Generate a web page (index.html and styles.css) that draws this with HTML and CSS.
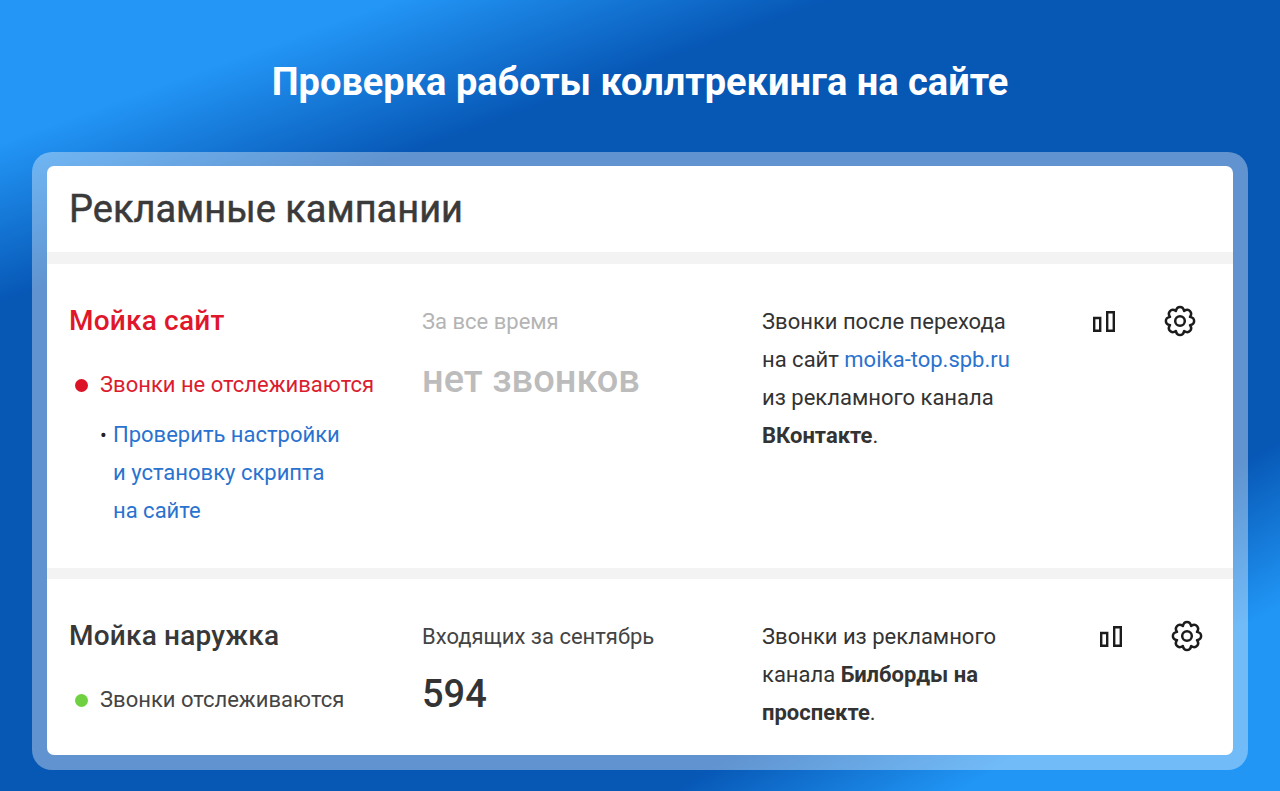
FILE: index.html
```html
<!DOCTYPE html>
<html lang="ru">
<head>
    <meta charset="UTF-8">
    <title>Проверка работы коллтрекинга на сайте</title>
    <link rel="stylesheet" href="styles.css">
</head>
<body>
    <svg class="icon-defs" width="0" height="0">
        <symbol id="icon-bars" viewBox="0 0 22 21">
            <path d="M1.2 7h6v12.800h-6zM14.200 1.200h6.600v18.600h-6.600z" fill="none" stroke="currentColor" stroke-width="2.400"/>
        </symbol>
        <symbol id="icon-gear" viewBox="0 0 32 32">
            <path d="M11.870 6.020C12.900 .5 19.100 .5 20.130 6.020C24.770 2.850 29.150 7.230 25.980 11.870C31.500 12.900 31.500 19.100 25.980 20.130C29.150 24.770 24.770 29.150 20.130 25.980C19.100 31.500 12.900 31.500 11.870 25.980C7.230 29.150 2.850 24.770 6.020 20.130C.5 19.100 .5 12.900 6.020 11.870C2.850 7.230 7.230 2.850 11.870 6.020Z" fill="none" stroke="currentColor" stroke-width="2.500" stroke-linejoin="round"/>
            <circle cx="16" cy="16" r="4.800" fill="none" stroke="currentColor" stroke-width="2.500"/>
        </symbol>
    </svg>

    <h1 class="title">Проверка работы коллтрекинга на сайте</h1>

    <div class="frame">
        <div class="panel">
            <h2 class="panel-title">Рекламные кампании</h2>

            <!-- первая кампания -->
            <div class="campaign campaign-first">
                <div class="col-name">
                    <div class="name name-error">Мойка сайт</div>
                    <div class="status status-error"><span class="dot dot-red"></span>Звонки не отслеживаются</div>
                    <div class="hint">
                        <span class="hint-mark">•</span>
                        <a class="link" href="#">Проверить настройки<br>и установку скрипта<br>на сайте</a>
                    </div>
                </div>
                <div class="col-stat">
                    <div class="stat-label stat-label-muted">За все время</div>
                    <div class="stat-empty">нет звонков</div>
                </div>
                <div class="col-text">
                    Звонки после перехода<br>на сайт <a class="link" href="#">moika-top.spb.ru</a><br>из рекламного канала<br><b>ВКонтакте</b>.
                </div>
                <div class="col-icons">
                    <svg class="icon-bars"><use href="#icon-bars"/></svg>
                    <svg class="icon-gear"><use href="#icon-gear"/></svg>
                </div>
            </div>

            <!-- вторая кампания -->
            <div class="campaign campaign-second">
                <div class="col-name">
                    <div class="name">Мойка наружка</div>
                    <div class="status"><span class="dot dot-green"></span>Звонки отслеживаются</div>
                </div>
                <div class="col-stat">
                    <div class="stat-label">Входящих за сентябрь</div>
                    <div class="stat-value">594</div>
                </div>
                <div class="col-text">
                    Звонки из рекламного<br>канала <b>Билборды на<br>проспекте</b>.
                </div>
                <div class="col-icons">
                    <svg class="icon-bars"><use href="#icon-bars"/></svg>
                    <svg class="icon-gear"><use href="#icon-gear"/></svg>
                </div>
            </div>
        </div>
    </div>
</body>
</html>
```

FILE: styles.css
```css
/* Page background */
body {
    margin: 0;
    height: 791px;
    overflow: hidden;
    box-sizing: border-box;
    padding-top: 59px;
    font-family: Roboto, "Liberation Sans", sans-serif;
    color: #333;
    background-color: #0757b5;
    background-image:
        linear-gradient(150deg, rgba(33, 150, 245, 0) 1020px, #2196f5 1165px),
        linear-gradient(160deg, #2396f6 135px, rgba(35, 150, 246, 0) 285px);
}

.icon-defs {
    position: absolute;
}

.title {
    margin: 0;
    font-size: 38px;
    line-height: 46px;
    font-weight: 700;
    color: #fff;
    text-align: center;
}

.frame {
    margin: 47px 32px 0;
    padding: 14px 15px 15px;
    height: 618px;
    box-sizing: border-box;
    border-radius: 20px;
    background-color: rgba(255, 255, 255, 0.36);
}

.panel {
    height: 100%;
    background-color: #fff;
    border-radius: 7px;
    overflow: hidden;
}

.panel-title {
    margin: 0;
    height: 86px;
    padding: 20px 22px 0;
    box-sizing: border-box;
    font-size: 38px;
    line-height: 46px;
    font-weight: 400;
    color: #3a3a3a;
    -webkit-text-stroke: 0.5px #3a3a3a;
}

.campaign {
    display: flex;
    padding: 38px 0 0 22px;
    box-sizing: border-box;
    border-top: 12px solid #f3f3f3;
}

.campaign-first {
    height: 316px;
}

.campaign-second {
    height: 175px;
    border-top-width: 11px;
}

.col-name {
    width: 353px;
}

.col-stat {
    width: 340px;
}

.col-text {
    width: 331px;
    padding-top: 1px;
    font-size: 22px;
    line-height: 38px;
    color: #333;
}

.col-icons {
    display: flex;
    align-items: flex-start;
    gap: 49px;
}

.campaign-second .col-icons {
    margin-left: 6.5px;
}

.name {
    font-size: 28px;
    line-height: 38px;
    font-weight: 500;
    letter-spacing: 0.2px;
    color: #383838;
}

.name-error {
    color: #e0162b;
}

.status {
    display: flex;
    align-items: center;
    margin-top: 26px;
    font-size: 22px;
    line-height: 38px;
    color: #444;
}

.status-error {
    color: #dc1c2e;
}

.dot {
    width: 13px;
    height: 13px;
    margin: 0 12px 0 6px;
    border-radius: 50%;
}

.dot-red {
    background-color: #dc1226;
}

.dot-green {
    background-color: #6fd13f;
}

.hint {
    display: flex;
    margin: 12px 0 0 31px;
    font-size: 22px;
    line-height: 38px;
}

.hint-mark {
    width: 13px;
    color: #222;
    font-size: 20px;
}

.link {
    color: #2a72cf;
    text-decoration: none;
}

.stat-label {
    padding-top: 1px;
    font-size: 22px;
    line-height: 38px;
    color: #444;
}

.stat-label-muted {
    color: #b4b4b4;
}

.stat-empty {
    margin-top: 16px;
    font-size: 38px;
    line-height: 44px;
    font-weight: 500;
    color: #bcbcbc;
}

.stat-value {
    margin-top: 17px;
    font-size: 38px;
    line-height: 42px;
    font-weight: 500;
    color: #333;
}

.icon-bars {
    width: 22px;
    height: 21px;
    margin-top: 9px;
    color: #1c1c1c;
}

.icon-gear {
    width: 32px;
    height: 32px;
    margin-top: 3px;
    color: #1c1c1c;
}
```
